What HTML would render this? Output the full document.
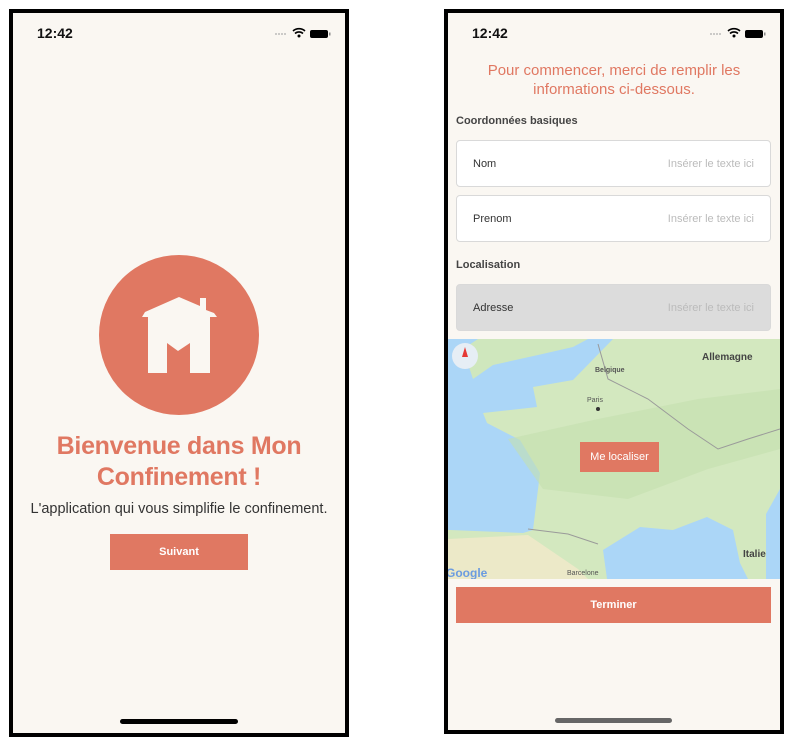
<!DOCTYPE html>
<html><head><meta charset="utf-8"><style>
*{margin:0;padding:0;box-sizing:border-box}
body{width:795px;height:747px;background:#fff;position:relative;font-family:"Liberation Sans",sans-serif;overflow:hidden}
.ph{position:absolute;background:#faf7f2;border:4px solid #000}
.a{position:absolute}
.t{font-weight:bold;font-size:14px;color:#111}
.c{text-align:center}
.btn{position:absolute;background:#e07862;color:#fff;font-weight:bold;font-size:11px;text-align:center}
.in{position:absolute;left:456px;width:315px;height:47px;border:1px solid #d9d9d9;border-radius:4px;background:#fff;font-size:11px}
.in .l{position:absolute;left:16px;top:17px;color:#333}
.in .p{position:absolute;right:16px;top:17px;color:#bbb}
.lab{position:absolute;left:456px;font-size:11px;font-weight:bold;color:#444}
</style></head><body>
<div class="ph" style="left:9px;top:9px;width:340px;height:728px"></div>
<div class="ph" style="left:444px;top:9px;width:340px;height:725px"></div>

<div class="a t" style="left:37px;top:25px">12:42</div>
<svg class="a" style="left:274px;top:27px" width="60" height="12"><g fill="#aaa"><circle cx="2" cy="7" r="0.9"/><circle cx="5" cy="7" r="0.9"/><circle cx="8" cy="7" r="0.9"/><circle cx="11" cy="7" r="0.9"/></g><path d="M19 4a9 9 0 0 1 12 0M21 6.5a6 6 0 0 1 8 0" stroke="#000" stroke-width="1.6" fill="none"/><circle cx="25" cy="9" r="1.5"/><rect x="36" y="3" width="18" height="8" rx="2"/><rect x="55" y="5.5" width="1.5" height="3" fill="#888"/></svg>

<svg class="a" style="left:99px;top:255px" width="160" height="160" viewBox="0 0 160 160"><circle cx="80" cy="80" r="80" fill="#e07862"/><path d="M43 62 L46 57 L80 42 L101 51 L101 43 L107 43 L107 55 L115 58 L118 62 L111 62 L111 118 L91 118 L91 88 L79 96 L68 88 L68 118 L49 118 L49 62 Z" fill="#faf7f2"/></svg>

<div class="a c" style="left:14px;width:330px;top:431px;font-size:25px;line-height:31px;color:#e07862;font-weight:bold;letter-spacing:-0.3px">Bienvenue dans Mon<br>Confinement !</div>
<div class="a c" style="left:14px;width:330px;top:501px;font-size:14.5px;color:#333">L'application qui vous simplifie le confinement.</div>
<div class="btn" style="left:110px;top:534px;width:138px;height:36px;line-height:36px">Suivant</div>
<div class="a" style="left:120px;top:719px;width:118px;height:5px;border-radius:3px;background:#000"></div>

<div class="a t" style="left:472px;top:25px">12:42</div>
<svg class="a" style="left:709px;top:27px" width="60" height="12"><g fill="#aaa"><circle cx="2" cy="7" r="0.9"/><circle cx="5" cy="7" r="0.9"/><circle cx="8" cy="7" r="0.9"/><circle cx="11" cy="7" r="0.9"/></g><path d="M19 4a9 9 0 0 1 12 0M21 6.5a6 6 0 0 1 8 0" stroke="#000" stroke-width="1.6" fill="none"/><circle cx="25" cy="9" r="1.5"/><rect x="36" y="3" width="18" height="8" rx="2"/><rect x="55" y="5.5" width="1.5" height="3" fill="#888"/></svg>

<div class="a c" style="left:448px;width:332px;top:61px;font-size:15px;line-height:19px;color:#e07862">Pour commencer, merci de remplir les<br>informations ci-dessous.</div>
<div class="lab" style="top:115px">Coordonnées basiques</div>
<div class="in" style="top:140px"><span class="l">Nom</span><span class="p">Insérer le texte ici</span></div>
<div class="in" style="top:195px"><span class="l">Prenom</span><span class="p">Insérer le texte ici</span></div>
<div class="lab" style="top:259px">Localisation</div>
<div class="in" style="top:284px;background:#dcdcdc"><span class="l">Adresse</span><span class="p">Insérer le texte ici</span></div>

<svg class="a" style="left:448px;top:339px" width="332" height="240" viewBox="0 0 332 240">
<rect width="332" height="240" fill="#abd6f7"/>
<path d="M25 40 L45 26 L90 16 L125 8 L140 0 L30 0 L15 10 Z" fill="#cfe7bd"/>
<path d="M165 0 L125 41 L85 48 L89 68 L35 74 L39 84 L72 101 L92 134 L85 191 L75 194 L2 191 L0 191 L0 240 L159 240 L155 211 L192 188 L225 191 L259 178 L285 191 L292 224 L300 240 L318 240 L318 175 L332 150 L332 0 Z" fill="#d3e8bf"/>
<path d="M0 200 L80 196 L130 230 L140 240 L0 240 Z" fill="#ece9c8"/>
<path d="M60 100 L150 80 L250 60 L332 50 L332 110 L260 130 L180 160 L95 150 Z" fill="#c4e0af" opacity=".6"/>
<path d="M150 5 L160 40 L200 60 L240 90 L270 110 L300 100 L332 90" stroke="#9a9a9a" stroke-width="1" fill="none"/>
<path d="M80 190 L120 195 L150 205" stroke="#9a9a9a" stroke-width="1" fill="none"/>
<circle cx="17" cy="17" r="13" fill="#e6eef5"/><path d="M17 8 L20 18 L14 18 Z" fill="#e53935"/>
<text x="254" y="21" font-size="10" font-weight="bold" fill="#444" font-family="Liberation Sans">Allemagne</text>
<text x="147" y="33" font-size="7" font-weight="bold" fill="#555" font-family="Liberation Sans">Belgique</text>
<text x="139" y="63" font-size="7" fill="#555" font-family="Liberation Sans">Paris</text><circle cx="150" cy="70" r="2" fill="#333"/>
<text x="295" y="218" font-size="10" font-weight="bold" fill="#444" font-family="Liberation Sans">Italie</text>
<text x="119" y="236" font-size="7" fill="#555" font-family="Liberation Sans">Barcelone</text>
<text x="-2" y="238" font-size="12" font-weight="bold" fill="#6b9be0" font-family="Liberation Sans">Google</text>
</svg>
<div class="btn" style="left:580px;top:442px;width:79px;height:30px;line-height:30px;font-weight:normal;font-size:11px">Me localiser</div>
<div class="btn" style="left:456px;top:587px;width:315px;height:36px;line-height:36px">Terminer</div>
<div class="a" style="left:555px;top:718px;width:117px;height:5px;border-radius:3px;background:#666"></div>
</body></html>
